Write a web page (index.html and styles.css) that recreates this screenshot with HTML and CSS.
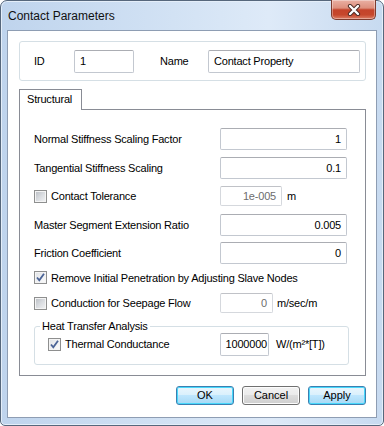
FILE: index.html
```html
<!DOCTYPE html>
<html>
<head>
<meta charset="utf-8">
<link rel="stylesheet" href="styles.css">
</head>
<body>
<div class="window">
  <div class="titlebar">
    <span class="title">Contact Parameters</span>
    <div class="close">
      <svg width="14" height="12" viewBox="0 0 14 12">
        <path d="M3 2 L11 10 M11 2 L3 10" stroke="#4a2a24" stroke-width="4.2" stroke-linecap="round"/>
        <path d="M3 2 L11 10 M11 2 L3 10" stroke="#ffffff" stroke-width="2.4" stroke-linecap="round"/>
      </svg>
    </div>
  </div>
  <div class="client">
    <div class="idgroup">
      <span class="lbl lbl-id">ID</span>
      <div class="input input-id">1</div>
      <span class="lbl lbl-name">Name</span>
      <div class="input input-name">Contact Property</div>
    </div>
    <div class="tabstrip">
      <div class="tab">Structural</div>
      <div class="tabfill"></div>
    </div>
    <div class="panel">
      <div class="row">
        <span class="rlabel">Normal Stiffness Scaling Factor</span>
        <div class="input num wide">1</div>
      </div>
      <div class="row">
        <span class="rlabel">Tangential Stiffness Scaling</span>
        <div class="input num wide">0.1</div>
      </div>
      <div class="row">
        <span class="rlabel chk-label"><span class="cb"></span>Contact Tolerance</span>
        <div class="input num dis w62">1e-005</div>
        <span class="unit u5">m</span>
      </div>
      <div class="row">
        <span class="rlabel">Master Segment Extension Ratio</span>
        <div class="input num wide">0.005</div>
      </div>
      <div class="row">
        <span class="rlabel">Friction Coefficient</span>
        <div class="input num wide">0</div>
      </div>
      <div class="row row-short">
        <span class="chk-label"><span class="cb checked"><svg width="11" height="11" viewBox="0 0 11 11"><path d="M2 5.5 L4.3 8.3 L9 1.8" fill="none" stroke="#4a6396" stroke-width="1.8"/></svg></span>Remove Initial Penetration by Adjusting Slave Nodes</span>
      </div>
      <div class="row row-cond">
        <span class="rlabel chk-label"><span class="cb"></span>Conduction for Seepage Flow</span>
        <div class="input num dis w53">0</div>
        <span class="unit u4">m/sec/m</span>
      </div>
      <fieldset class="heat">
        <legend>Heat Transfer Analysis</legend>
        <div class="row row-heat">
          <span class="hlabel chk-label"><span class="cb checked"><svg width="11" height="11" viewBox="0 0 11 11"><path d="M2 5.5 L4.3 8.3 L9 1.8" fill="none" stroke="#4a6396" stroke-width="1.8"/></svg></span>Thermal Conductance</span>
          <div class="input num tall w49">1000000</div>
          <span class="unit u7">W/(m²*[T])</span>
        </div>
      </fieldset>
    </div>
    <div class="buttons">
      <div class="btn btn-default">OK</div>
      <div class="btn btn-cancel">Cancel</div>
      <div class="btn btn-default">Apply</div>
    </div>
  </div>
</div>
</body>
</html>
```
FILE: styles.css
```css
* { box-sizing: border-box; }
html, body { margin: 0; padding: 0; background: #ffffff; }
body {
  width: 384px;
  height: 426px;
  font-family: "Liberation Sans", Arial, sans-serif;
  font-size: 11px;
  letter-spacing: -0.2px;
  color: #000;
  overflow: hidden;
}
.window {
  width: 384px;
  height: 426px;
  border: 1px solid #56677c;
  border-radius: 7px 7px 5px 5px;
  background: linear-gradient(90deg, #bfd4ed 0%, #d2e2f4 45%, #deeaf8 70%, #c7daf0 100%);
  padding: 0 6px 7px 6px;
  display: flex;
  flex-direction: column;
  box-shadow: inset 0 0 0 1px #e4eef9;
}
.titlebar {
  height: 29px;
  display: flex;
  align-items: flex-start;
}
.title {
  margin-top: 8px;
  padding-left: 1px;
  font-size: 12px;
  color: #111;
  letter-spacing: 0;
}
.close {
  margin-left: auto;
  margin-top: -1px;
  margin-right: 1px;
  width: 45px;
  height: 20px;
  border: 1px solid #7d3b2e;
  border-top: none;
  border-radius: 0 0 5px 5px;
  background: linear-gradient(180deg, #eab0a3 0%, #dd8f7d 42%, #c4432a 52%, #c6472c 78%, #dc7e66 100%);
  display: flex;
  align-items: center;
  justify-content: center;
  box-shadow: inset 0 0 0 1px rgba(255,255,255,0.35);
}
.close svg { display: block; }
.client {
  flex: 1;
  background: #ffffff;
  border: 1px solid #8e9db3;
  padding: 10px 0 0 11px;
}
.idgroup {
  width: 347px;
  height: 40px;
  border: 1px solid #d5dfe5;
  border-radius: 3px;
  display: flex;
  align-items: flex-start;
  padding: 8px 0 0 14px;
}
.lbl { line-height: 23px; height: 23px; }
.lbl-id { width: 40px; }
.lbl-name { width: 48px; margin-left: 26px; }
.input {
  height: 23px;
  border: 1px solid #c3c8d0;
  border-top-color: #abadb3;
  border-radius: 2px;
  background: #fff;
  line-height: 21px;
  padding: 0 5px;
  white-space: nowrap;
  overflow: hidden;
}
.input-id { width: 60px; }
.input-name { width: 152px; }
.tabstrip {
  margin-top: 8px;
  display: flex;
  width: 347px;
  height: 21px;
}
.tab {
  width: 63px;
  height: 21px;
  border: 1px solid #898c95;
  border-bottom: none;
  background: #fff;
  padding-left: 7px;
  line-height: 19px;
}
.tabfill {
  flex: 1;
  border-bottom: 1px solid #898c95;
}
.panel {
  width: 347px;
  height: 266px;
  border: 1px solid #898c95;
  border-top: none;
  padding: 18px 0 0 14px;
  display: flex;
  flex-direction: column;
  gap: 6.5px;
}
.row {
  display: flex;
  align-items: center;
  height: 22px;
}
.row-short { height: 14px; }
.row-cond { margin-top: 1px; height: 22px; }
.rlabel { width: 186px; display: flex; align-items: center; }
.chk-label { display: flex; align-items: center; }
.num { text-align: right; height: 22px; line-height: 20px; }
.wide { width: 127px; }
.dis { color: #6d6d6d; height: 20px; line-height: 18px; border-color: #d5d8dd; border-top-color: #c0c2c7; }
.w62 { width: 62px; }
.w53 { width: 53px; }
.w49 { width: 49px; padding: 0 1px; }
.tall { height: 23px; line-height: 21px; }
.unit { white-space: nowrap; }
.u5 { margin-left: 5px; }
.u4 { margin-left: 4px; }
.u7 { margin-left: 7px; }
.cb {
  width: 13px;
  height: 13px;
  border: 1px solid #8e8f8f;
  background: linear-gradient(135deg, #b8bcc2 0%, #d9dce0 50%, #f3f4f5 100%);
  box-shadow: inset 0 0 0 1px #f4f4f4;
  margin-right: 4px;
  display: flex;
  align-items: center;
  justify-content: center;
  flex: none;
}
.cb.checked {
  background: linear-gradient(135deg, #dfe2e6 0%, #f1f2f4 60%, #fbfbfb 100%);
}
.cb svg { display: block; }
.heat {
  margin: 0;
  width: 315px;
  height: 44px;
  border: 1px solid #d5dfe5;
  border-radius: 3px;
  padding: 1px 0 0 13px;
}
.heat legend {
  padding: 0 2px;
  margin-left: -8px;
  line-height: 11px;
  font-size: 11px;
}
.row-heat { height: 23px; }
.hlabel { width: 172px; }
.buttons {
  width: 347px;
  margin-top: 10px;
  display: flex;
  justify-content: flex-end;
}
.btn {
  width: 58px;
  height: 19px;
  border: 1px solid #707070;
  border-radius: 3px;
  text-align: center;
  line-height: 17px;
  background: linear-gradient(180deg, #f2f2f2 0%, #ebebeb 49%, #dddddd 50%, #cfcfcf 100%);
  box-shadow: inset 0 0 0 1px #fcfcfc;
  letter-spacing: 0;
}
.btn + .btn { margin-left: 8px; }
.btn-cancel { margin-left: 9px; }
.btn-default {
  border-color: #3c7fb1;
  background: linear-gradient(180deg, #eaf6fd 0%, #d9f0fc 49%, #bee6fd 50%, #a7d9f5 100%);
  box-shadow: inset 0 0 0 1px #48d8fb;
}
```
